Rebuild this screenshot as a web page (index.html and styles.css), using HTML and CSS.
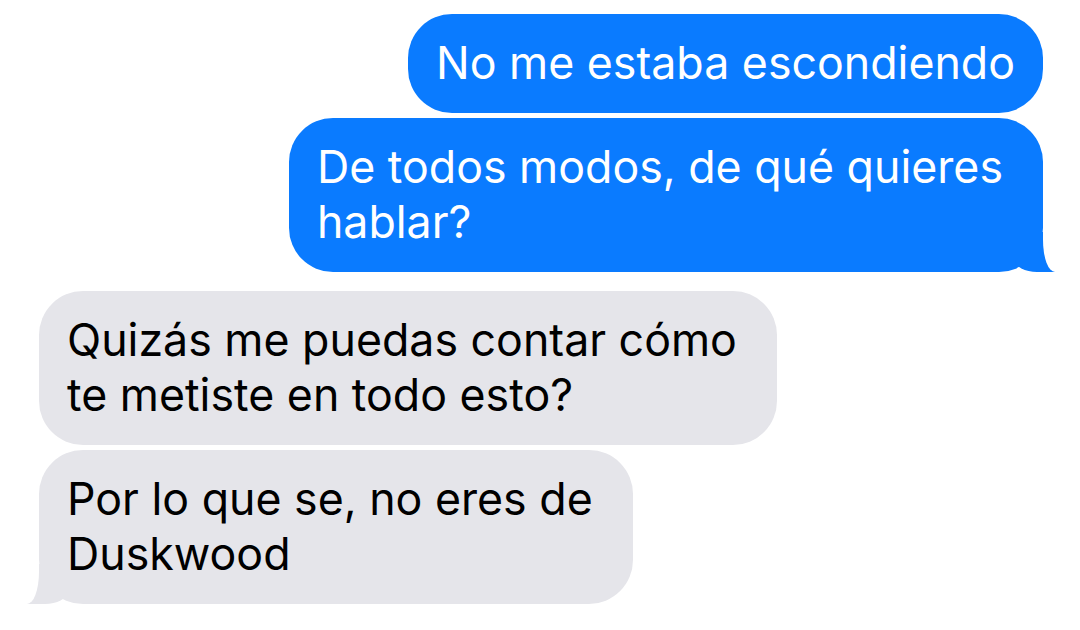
FILE: index.html
```html
<!DOCTYPE html>
<html lang="es">
<head>
    <meta charset="UTF-8">
    <meta name="viewport" content="width=device-width, initial-scale=1.0">
    <title>Mensajes</title>
    <link rel="stylesheet" href="styles.css">
</head>
<body>
    <div class="thread">
        <div class="bubble sent">No me estaba escondiendo</div>
        <div class="bubble sent wrapped tail">De todos modos, de qué quieres<br>hablar?</div>

        <div class="bubble received wrapped group-start">Quizás me puedas contar cómo<br>te metiste en todo esto?</div>
        <div class="bubble received wrapped tail">Por lo que se, no eres de<br>Duskwood</div>
    </div>
</body>
</html>
```

FILE: styles.css
```css
body {
    margin: 0;
    background-color: #fff;
    font-family: 'Inter', 'Noto Sans', sans-serif;
}

.thread {
    display: flex;
    flex-direction: column;
    gap: 5px;
    padding: 14px 37px 0 39px;
}

.bubble {
    position: relative;
    font-size: 44.7px;
    line-height: 55px;
    padding: 22px 28px;
    border-radius: 44px;
}
/* multi-line bubbles keep the width of the trailing space */
.bubble.wrapped {
    padding-right: 40px;
}

.sent {
    align-self: flex-end;
    background-color: #0a7bff;
    color: #fff;
}

.received {
    align-self: flex-start;
    background-color: #e5e5ea;
    color: #000;
}

.group-start {
    margin-top: 14px;
}

/* tail of the last bubble in a group */
.tail::before,
.tail::after {
    content: "";
    position: absolute;
    bottom: 0;
    height: 40px;
}

.sent.tail::before {
    right: -12px;
    width: 40px;
    background-color: #0a7bff;
    border-bottom-left-radius: 22px 12px;
}
.sent.tail::after {
    right: -40px;
    width: 40px;
    background-color: #fff;
    border-bottom-left-radius: 12px 32px;
}

.received.tail::before {
    left: -12px;
    width: 40px;
    background-color: #e5e5ea;
    border-bottom-right-radius: 22px 12px;
}
.received.tail::after {
    left: -40px;
    width: 40px;
    background-color: #fff;
    border-bottom-right-radius: 12px 32px;
}
```
